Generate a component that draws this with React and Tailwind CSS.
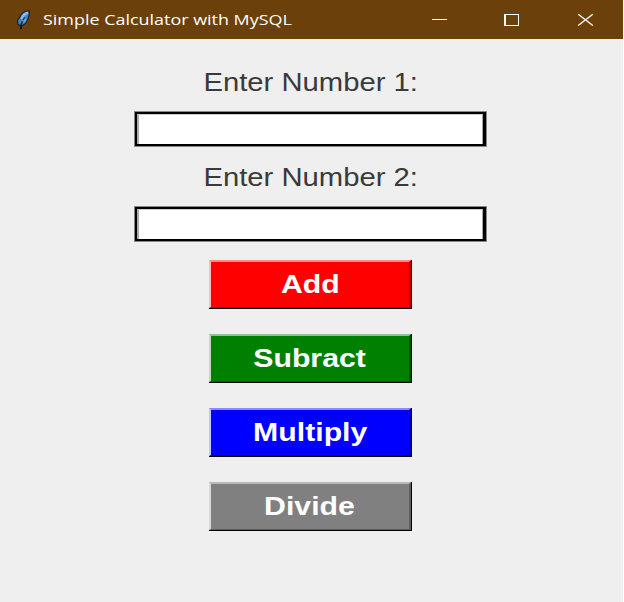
const ARIAL = "font-['Liberation_Sans',Arial,sans-serif]";

function Feather() {
  return (
    <svg width="16" height="20" viewBox="0 0 16 20" className="shrink-0">
      <path d="M6 19.2V14" stroke="#15110c" strokeWidth="1.8" fill="none" />
      <path d="M14.3 .8 C10 .8 6 3.6 4.6 7.6 L2.4 10.8 L3.2 14.6 L6 16 C9.2 15 11.6 12.6 12.8 9.4 C13.8 7 14.6 4 14.3 .8Z" fill="#4384cc" stroke="#1b1a18" strokeWidth="1.1" />
      <path d="M13 2.6 C10 3.4 7.8 5.8 6.4 9" stroke="#8dbdf0" strokeWidth="2.4" fill="none" />
      <path d="M9.6 7.6 L8.4 10 M7.4 11.4 L5.8 15.2" stroke="#1a2736" strokeWidth="1.5" fill="none" />
      <path d="M10.8 8.6 L8.8 12.4" stroke="#6fa8e4" strokeWidth="1.8" fill="none" />
    </svg>
  );
}

function TitleBar() {
  return (
    <header className="flex h-[39px] w-full items-center bg-[#6b400b] pl-[15px]">
      <Feather />
      <h1 className="ml-[11.5px] origin-left scale-x-[1.195] whitespace-nowrap font-['Open_Sans','Noto_Sans',sans-serif] text-[15px] font-normal leading-[39px] text-white">
        Simple Calculator with MySQL
      </h1>
      <div className="ml-auto flex h-full items-center">
        <svg width="192" height="39" viewBox="0 0 192 39" fill="none">
          <path d="M1 19.5H16" stroke="#fff" />
          <path d="M73 14h15v12H73zM75 15v10h12V15z" fill="#fff" fillRule="evenodd" />
          <path d="M147.2 14.2L161.8 25.5M161.8 14.2L147.2 25.5" stroke="#fff" strokeWidth="1.3" />
        </svg>
      </div>
    </header>
  );
}

function Field({ label }) {
  return (
    <label className="flex h-[95px] flex-col items-center">
      <span className={`${ARIAL} flex h-[33px] scale-x-[1.17] items-center whitespace-nowrap text-[25px] leading-none text-[#3a3a3a]`}>
        {label}
      </span>
      <span className="mt-[12px] block h-[36px] w-[353px] border border-[#888]">
        <span className="block h-[34px] border-2 border-r-[3px] border-black">
          <input className="block h-[30px] w-full border-l-2 border-r border-t border-l-[#aaa] border-r-[#aaa] border-t-[#ccc] bg-white outline-none" />
        </span>
      </span>
    </label>
  );
}

const BUTTONS = [
  { text: "Add", face: "bg-[#ff0000]", light: "border-l-[#ffbcbc] border-t-[#ff8c8c]", dark: "border-r-[#b80000] border-b-[#d00000]" },
  { text: "Subract", face: "bg-[#008000]", light: "border-l-[#bcdcbc] border-t-[#8cc68c]", dark: "border-r-[#005000] border-b-[#006000]" },
  { text: "Multiply", face: "bg-[#0000ff]", light: "border-l-[#c4c4ff] border-t-[#8c8cff]", dark: "border-r-[#0000b0] border-b-[#0000c8]" },
  { text: "Divide", face: "bg-[#808080]", light: "border-l-[#d8d8d8] border-t-[#b8b8b8]", dark: "border-r-[#606060] border-b-[#606060]" },
];

function OperationButton({ text, face, light, dark }) {
  return (
    <div className="h-[49px] w-[203px] border-b border-r border-black">
      <button className={`${face} ${light} ${dark} flex h-[48px] w-[202px] items-center justify-center border-b border-l-2 border-r-2 border-t-2`}>
        <span className={`${ARIAL} scale-x-[1.21] text-[25px] font-bold leading-none text-white`}>{text}</span>
      </button>
    </div>
  );
}

export default function App() {
  return (
    <div className="h-[602px] w-[624px] bg-white">
      <div className="flex h-[602px] w-[623px] flex-col bg-[#efefef]">
        <TitleBar />
        <main className="flex flex-col items-center pr-[2px] pt-[27px]">
          <Field label="Enter Number 1:" />
          <Field label="Enter Number 2:" />
          <div className="mt-[4px] flex flex-col gap-[25px]">
            {BUTTONS.map((b) => (
              <OperationButton key={b.text} {...b} />
            ))}
          </div>
        </main>
      </div>
    </div>
  );
}
